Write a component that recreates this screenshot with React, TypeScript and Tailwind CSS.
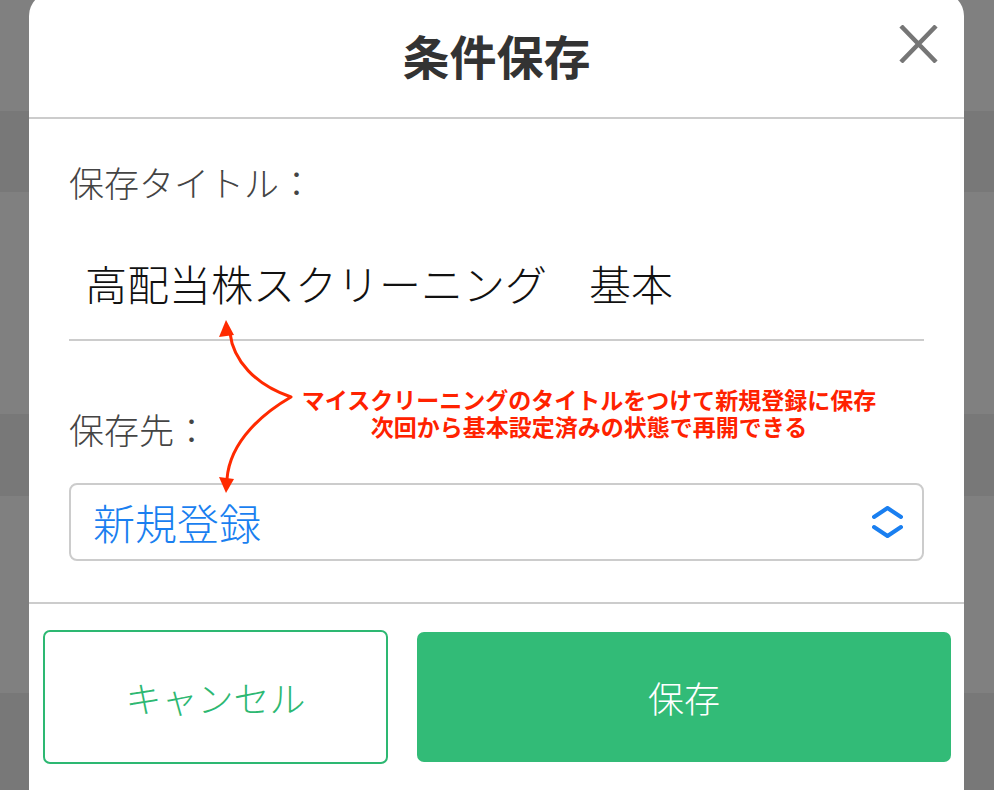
export default function App() {
  return (
    <div className="relative w-[994px] h-[790px] overflow-hidden font-['Noto_Sans_CJK_JP',sans-serif]">
      {/* backdrop rows behind the modal */}
      <div className="flex flex-col h-full">
        <div className="h-[111px] bg-[#808080]" />
        <div className="h-[81px] bg-[#787878]" />
        <div className="h-[222px] bg-[#808080]" />
        <div className="h-[82px] bg-[#787878]" />
        <div className="h-[197px] bg-[#808080]" />
        <div className="flex-1 bg-[#787878]" />
      </div>

      <div className="absolute left-[29px] top-[-8px] w-[935px] h-[798px] bg-white rounded-t-[24px] flex flex-col">
        <header className="relative h-[127px] shrink-0 flex items-center justify-center border-b-2 border-[#cccccc]">
          <h1 className="text-[47px] leading-none font-bold text-[#333333]">条件保存</h1>
          <button className="absolute right-[26px] top-[33px] w-[39px] h-[38px]">
            <svg width="39" height="38" viewBox="0 0 39 38">
              <path d="M2 1 L37 37 M37 1 L2 37" stroke="#767676" strokeWidth="4.5" fill="none" />
            </svg>
          </button>
        </header>

        <div className="px-[40px] pt-[45px] pb-[41px] border-b-2 border-[#cccccc] shrink-0 font-light">
          <div className="text-[35px] leading-none text-[#444444]">保存タイトル：</div>
          <div className="mt-[63px] pb-[35px] border-b-2 border-[#cccccc]">
            <div className="pl-[16px] text-[42px] leading-none text-[#111111]">高配当株スクリーニング　基本</div>
          </div>
          <div className="mt-[70px] text-[35px] leading-none text-[#444444]">保存先：</div>
          <div className="mt-[37px] h-[78px] border-2 border-[#cccccc] rounded-[8px] flex items-center justify-between pl-[22px] pr-[19px]">
            <span className="text-[42px] leading-none text-[#1a7ff0]">新規登録</span>
            <svg width="31" height="32" viewBox="0 0 31 32">
              <path d="M2 11 L15.5 2 L29 11 M2 21 L15.5 30 L29 21" stroke="#1a7ff0" strokeWidth="4" strokeLinecap="round" strokeLinejoin="round" fill="none" />
            </svg>
          </div>
        </div>

        <div className="flex items-start gap-[29px] pl-[14px] pr-[13px] pt-[26px] font-light">
          <div className="w-[345px] h-[134px] border-2 border-[#2db872] rounded-[7px] flex items-center justify-center">
            <span className="text-[36px] leading-none text-[#2db872]">キャンセル</span>
          </div>
          <div className="flex-1 h-[130px] mt-[2px] bg-[#32bb77] rounded-[7px] flex items-center justify-center">
            <span className="text-[36px] leading-none text-white">保存</span>
          </div>
        </div>
      </div>

      {/* annotation overlay */}
      <svg className="absolute left-0 top-0 pointer-events-none" width="994" height="790" viewBox="0 0 994 790">
        <path d="M230 333 C233 360 255 385 291 397 C265 412 230 440 227 479" stroke="#ff2a00" strokeWidth="3" fill="none" strokeLinejoin="round" />
        <path d="M226 320 L219 337 L234 335 Z" fill="#ff2a00" />
        <path d="M226 493 L219 477 L234 479 Z" fill="#ff2a00" />
      </svg>
      <div className="absolute left-[289px] top-[388px] w-[600px] flex flex-col items-center gap-[4px] text-[23px] leading-none font-bold text-[#ff2200]">
        <div>マイスクリーニングのタイトルをつけて新規登録に保存</div>
        <div>次回から基本設定済みの状態で再開できる</div>
      </div>
    </div>
  );
}
